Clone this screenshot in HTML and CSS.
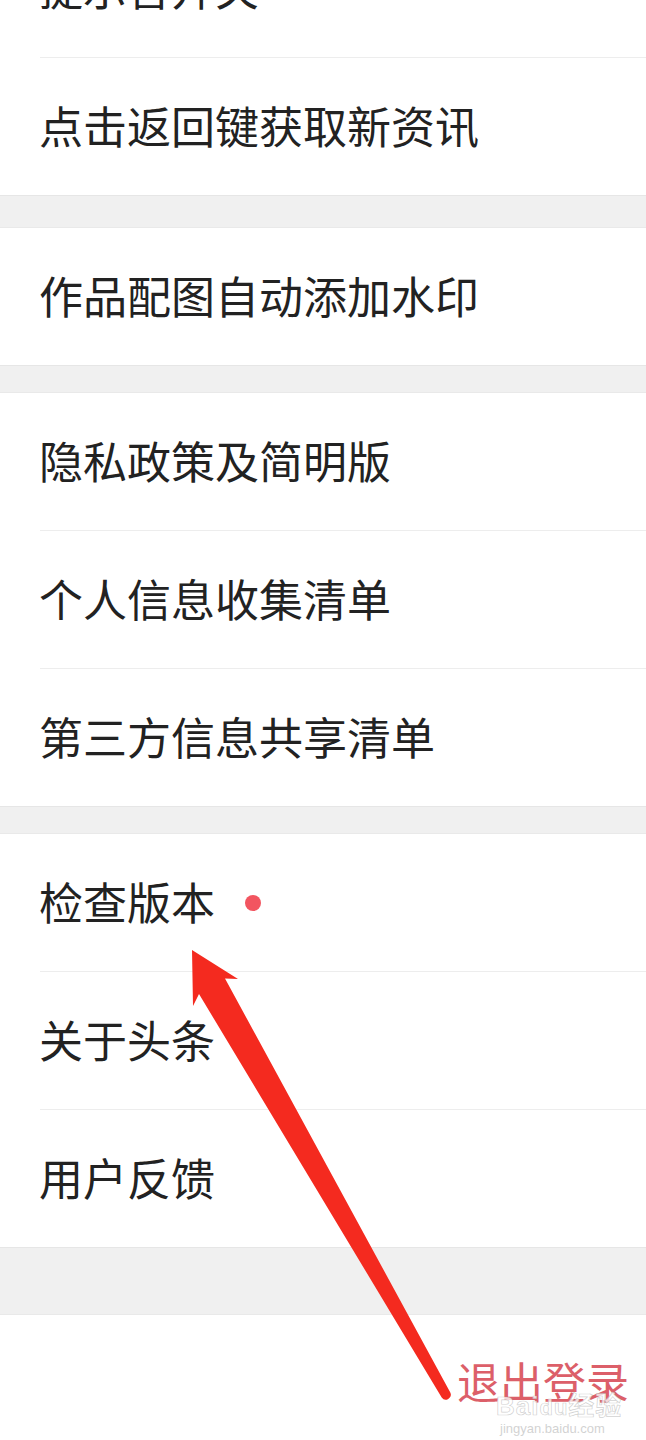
FILE: index.html
```html
<!DOCTYPE html>
<html lang="zh-CN">
<head>
<meta charset="utf-8">
<title>设置</title>
<link rel="stylesheet" href="styles.css">
</head>
<body>
<div class="page">
  <div class="list">
    <section class="group">
      <div class="row"><span class="label">提示音开关</span></div>
      <div class="row"><span class="label">点击返回键获取新资讯</span></div>
    </section>
    <div class="gap gap-first"></div>
    <section class="group">
      <div class="row"><span class="label">作品配图自动添加水印</span></div>
    </section>
    <div class="gap"></div>
    <section class="group">
      <div class="row"><span class="label">隐私政策及简明版</span></div>
      <div class="row"><span class="label">个人信息收集清单</span></div>
      <div class="row"><span class="label">第三方信息共享清单</span></div>
    </section>
    <div class="gap"></div>
    <section class="group">
      <div class="row"><span class="label">检查版本</span><span class="dot"></span></div>
      <div class="row"><span class="label">关于头条</span></div>
      <div class="row"><span class="label">用户反馈</span></div>
    </section>
    <div class="gap gap-tall"></div>
    <div class="footer"><span class="logout">退出登录</span></div>
  </div>

  <svg class="arrow" width="646" height="1440" viewBox="0 0 646 1440" aria-hidden="true">
    <path d="M192 950 L238 979 L225 978.5 L450.3 1392.5 A5 5 0 0 1 441.7 1397.5 L199 994 L193 1006 Z" fill="#f42a1f"/>
  </svg>

  <div class="watermark">
    <span class="wm-brand">Bai<span class="wm-paw">du</span>经验</span>
    <span class="wm-url">jingyan.baidu.com</span>
  </div>
</div>
</body>
</html>
```

FILE: styles.css
```css
* {
  box-sizing: border-box;
}

html, body {
  margin: 0;
  padding: 0;
  background: #ffffff;
}

body {
  font-family: "Noto Sans CJK SC", "Noto Sans", sans-serif;
  color: #222222;
}

.page {
  position: relative;
  width: 646px;
  height: 1440px;
  overflow: hidden;
}

.list {
  display: flex;
  flex-direction: column;
  margin-top: -80px;
}

.group {
  background: #ffffff;
  padding-left: 40px;
  display: flex;
  flex-direction: column;
}

.row {
  height: 137px;
  display: flex;
  align-items: center;
  padding-bottom: 4px;
  font-size: 44px;
  line-height: 1;
}

.row + .row {
  height: 138px;
  border-top: 1px solid #ededed;
}

.label {
  margin-left: -1px;
  white-space: nowrap;
}

.dot {
  width: 16px;
  height: 16px;
  border-radius: 50%;
  background: #f25560;
  margin-left: 30px;
  margin-top: 4px;
}

.gap {
  height: 28px;
  background: #f0f0f0;
  border-top: 1px solid #e6e6e6;
  border-bottom: 1px solid #e9e9e9;
}

.gap-first {
  height: 33px;
}

.gap-tall {
  height: 68px;
}

.footer {
  display: flex;
  justify-content: flex-end;
  padding: 44px 17px 0 0;
}

.logout {
  font-size: 43px;
  line-height: 1;
  color: #dc5f69;
}

.arrow {
  position: absolute;
  left: 0;
  top: 0;
  pointer-events: none;
}

.watermark {
  position: absolute;
  left: 496px;
  top: 1392px;
  display: flex;
  flex-direction: column;
  align-items: flex-start;
  color: rgba(255, 255, 255, 0.75);
  -webkit-text-stroke: 0.7px rgba(170, 170, 170, 0.55);
  font-family: "Liberation Sans", "Noto Sans CJK SC", sans-serif;
  pointer-events: none;
}

.wm-brand {
  font-size: 26px;
  line-height: 28px;
  font-weight: bold;
  letter-spacing: 1px;
}

.wm-paw {
  font-size: 22px;
}

.wm-url {
  font-size: 13px;
  line-height: 14px;
  margin-left: 4px;
  -webkit-text-stroke: 0;
  color: rgba(190, 190, 190, 0.7);
}
```
